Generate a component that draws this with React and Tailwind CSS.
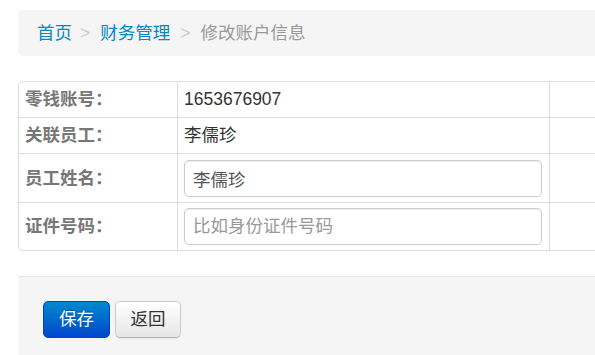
export default function App() {
  const rows = [
    { label: '零钱账号：', value: '1653676907', h: 'h-[35px]' },
    { label: '关联员工：', value: '李儒珍', h: 'h-[36px] border-t border-[#ddd]' },
    { label: '员工姓名：', input: '李儒珍', h: 'h-[49px] border-t border-[#ddd]' },
    { label: '证件号码：', placeholder: '比如身份证件号码', h: 'h-[48px] border-t border-[#ddd]' },
  ];

  return (
    <div className="w-[595px] h-[355px] overflow-hidden bg-white font-['Liberation_Sans','Noto_Sans_CJK_SC',sans-serif] text-[17.5px] leading-[25px] text-[#333]">
      <div className="w-[700px] pt-[10px] pl-[18px]">
        {/* Breadcrumb */}
        <div className="flex h-[46px] items-center rounded-[5px] bg-[#f5f5f5] px-[19px]">
          <a href="#" className="text-[#0088cc]">首页</a>
          <span className="px-[8px] text-[#ccc]">&gt;</span>
          <a href="#" className="ml-[2px] text-[#0088cc]">财务管理</a>
          <span className="px-[10px] text-[#ccc]">&gt;</span>
          <span className="text-[#999]">修改账户信息</span>
        </div>

        {/* Table */}
        <div className="mt-[25px] rounded-[5px] border border-[#ddd]">
          {rows.map((r, i) => (
            <div key={i} className={`grid grid-cols-[158px_372px_1fr] ${r.h}`}>
              <div className="flex items-center pl-[6px] font-bold text-[#777]">{r.label}</div>
              <div className="flex items-center border-l border-[#ddd] pl-[6px] pr-[6px]">
                {r.value && <span>{r.value}</span>}
                {(r.input || r.placeholder) && (
                  <input
                    defaultValue={r.input}
                    placeholder={r.placeholder}
                    className="h-[37px] w-[358px] rounded-[5px] border border-[#ccc] bg-white px-[8px] text-[17.5px] text-[#555] shadow-[inset_0_1px_1px_rgba(0,0,0,0.075)] outline-none placeholder:text-[#999]"
                  />
                )}
              </div>
              <div className="border-l border-[#ddd]"></div>
            </div>
          ))}
        </div>

        {/* Form actions */}
        <div className="mt-[25px] h-[120px] border-t border-[#e5e5e5] bg-[#f5f5f5] pt-[24px] pl-[25px]">
          <div className="flex gap-[5px]">
            <button className="h-[37px] w-[67px] rounded-[5px] border border-[#0044cc] bg-linear-to-b from-[#0088cc] to-[#0044cc] text-white [text-shadow:0_-1px_0_rgba(0,0,0,0.25)]">
              保存
            </button>
            <button className="h-[37px] w-[66px] rounded-[5px] border border-[#ccc] border-b-[#b3b3b3] bg-linear-to-b from-white to-[#e6e6e6] text-[#333] shadow-[inset_0_1px_0_rgba(255,255,255,0.2),0_1px_2px_rgba(0,0,0,0.05)]">
              返回
            </button>
          </div>
        </div>
      </div>
    </div>
  );
}
